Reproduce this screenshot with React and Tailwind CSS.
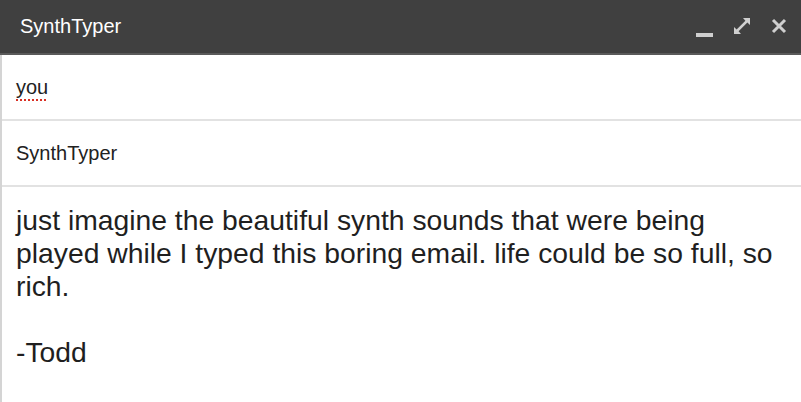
export default function App() {
  return (
    <div className="w-[801px] h-[402px] bg-white overflow-hidden flex flex-col font-['Liberation_Sans',Arial,sans-serif]">
      <div className="h-[55px] bg-[#404040] flex items-center pl-[20px] pr-[14px] border-b-2 border-[#5a5a5a] shrink-0">
        <span className="text-white text-[20px] leading-none -mt-[2px]">SynthTyper</span>
        <div className="ml-auto flex items-center gap-[20px] text-[#cfcfcf]">
          <div className="w-[17px] h-[17px] flex items-end">
            <div className="w-[17px] h-[4px] bg-[#cfcfcf] translate-y-[2px]"></div>
          </div>
          <svg width="18" height="18" viewBox="0 0 18 18" className="-mt-[1px]">
            <path d="M10 1h7v7l-2.6-2.6-8.8 8.8L8 17H1v-7l2.6 2.6 8.8-8.8z" fill="#cfcfcf" />
          </svg>
          <svg width="16" height="16" viewBox="0 0 16 16" className="-mt-[1px]">
            <path d="M2 2l12 12M14 2L2 14" stroke="#cfcfcf" strokeWidth="3" strokeLinecap="butt" />
          </svg>
        </div>
      </div>
      <div className="flex-1 flex flex-col border-l-2 border-[#d4d4d4]">
        <div className="h-[66px] flex items-center pl-[14px] border-b-2 border-[#e2e2e2] shrink-0">
          <span className="text-[20px] text-[#222] leading-none underline decoration-dotted decoration-[#d93025] decoration-2 underline-offset-[5px]">you</span>
        </div>
        <div className="h-[66px] flex items-center pl-[14px] border-b-2 border-[#e2e2e2] shrink-0">
          <span className="text-[20px] text-[#222] leading-none -mt-[1px]">SynthTyper</span>
        </div>
        <div className="pl-[14px] pr-[16px] pt-[17px] text-[28.3px] leading-[33px] text-[#1f1f1f]">
          <p>just imagine the beautiful synth sounds that were being played while I typed this boring email. life could be so full, so rich.</p>
          <p className="mt-[33px]">-Todd</p>
        </div>
      </div>
    </div>
  );
}
